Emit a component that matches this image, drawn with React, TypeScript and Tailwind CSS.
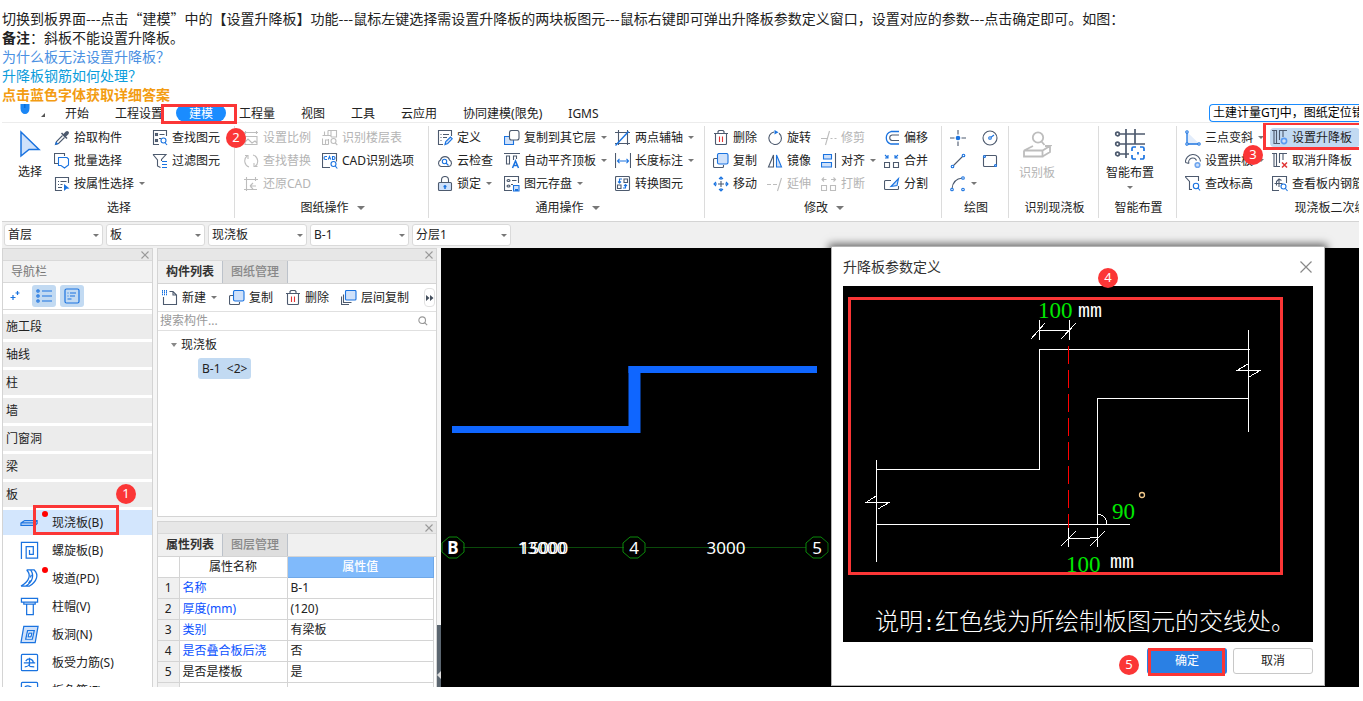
import type { ReactNode } from "react";

type Draw = (c: string, b: string) => ReactNode;

const SLATE = "#4d5a6e";
const BLUE = "#1a73e0";
const MUTED = "#bdbdbd";
const PALE = "#cfe1fa";

const icons: Record<string, Draw> = {
  picker: (c, b) => (
    <>
      <path d="M7.500 3l5.500 5.500" stroke={c} fill="none" strokeWidth="1.600" />
      <path d="M8.500 5 11.800 1.600a1.800 1.800 0 0 1 2.600 2.600L11 7.500z" fill={c} />
      <path d="M8.500 5.500 2.500 11.500 1.500 14.500 4.500 13.500 10.500 7.500" stroke={c} fill="none" />
      <path d="M1 15l1-3.500L4.500 14z" fill={b} />
    </>
  ),
  batch: (c, b) => (
    <>
      <path d="M4 10.500H.5V.5h10V3" stroke={c} fill="none" />
      <path d="M4.500 4.500h8.500l1.500 1.500v6l-4 3-3.500-2.500H4.500z" stroke={b} fill="#fff" />
    </>
  ),
  byProp: (c, b) => (
    <>
      <path d="M8 14.500H1.500V1.500h13V7M4 5.500h1M6.500 5.500h6M4 8.500h1M6.500 8.500h2M4 11.500h4" stroke={c} fill="none" />
      <path d="M10 8l5.500 4.500-3 .3-2.500 2.200z" fill={b} />
    </>
  ),
  find: (c, b) => (
    <>
      <path d="M7 14.500H1.500V.5h13V6M7.500 4.500h5M7 8.500h2" stroke={c} fill="none" />
      <rect x="3.500" y="3.500" width="2" height="2" stroke={c} fill="none" />
      <rect x="3.500" y="9.500" width="2" height="2" stroke={c} fill="none" />
      <circle cx="11.500" cy="10.500" r="2.500" stroke={b} fill="none" />
      <path d="M13 12.500l2 2.500" stroke={b} />
    </>
  ),
  filter: (c, b) => (
    <>
      <path d="M1 1.500h13L9.500 6.500V8M1 1.500 5.500 7v6l3 1.500" stroke={c} fill="none" />
      <path d="M10 8.500h5M10 11.500h5M10 14.500h5" stroke={b} />
    </>
  ),
  scale: (c) => (
    <path d="M1 2.500h14M2.500 1v3M13.500 1v3M2 6.500h12v8H2zM2 12l3-3 4 4 3-2 2 2" stroke={c} fill="none" />
  ),
  replace: (c) => (
    <path d="M6 14A6.500 6.500 0 0 1 4 3M2 2.500h3V6M10 2a6.500 6.500 0 0 1 2 11.500M14.500 13.500H11V10" stroke={c} fill="none" />
  ),
  restore: (c) => (
    <path d="M1 3.500h14M3.500 1v14M1 13.500h13M12.500 1v4M7 10l3-3M7 10l3 3M7 10h6" stroke={c} fill="none" />
  ),
  floors: (c) => (
    <>
      <path d="M6 .5h8.500V7H9M9 .5V7M6 .5V5.500M.5 5.500h8M2.500 5.500v-4M.5 8.500v6h6M3.500 14v-4h3M6.500 9v5.500" stroke={c} fill="none" />
      <circle cx="11.500" cy="11" r="2.500" stroke={c} fill="none" />
      <path d="M13.300 13l2 2" stroke={c} />
    </>
  ),
  cadOpt: (c, b) => (
    <>
      <path d="M8 14.500H.5V.5h14v8" stroke={c} fill="none" />
      <path d="M5 3.500H3.500a.9.9 0 0 0 0 3H5M6.300 6.500l1.200-3 1.200 3M10.500 3.500v3h1a1.500 1.500 0 0 0 0-3z" stroke={b} fill="none" />
      <circle cx="11.500" cy="11" r="2.500" stroke={b} fill="none" />
      <path d="M13.300 13l2 2.500" stroke={b} />
    </>
  ),
  define: (c, b) => (
    <>
      <path d="M6 14.500H1.500V.5h13V6M3.500 4.500h1M6 4.500h6M3.500 7.500h1M6 7.500h4M3.500 10.500h1" stroke={c} fill="none" />
      <path d="M8 14.500l.8-3 4.700-4.500 1.800 1.800-4.600 4.700z" stroke={b} fill={PALE} />
    </>
  ),
  cloud: (c, b) => (
    <>
      <path d="M4 13.500a3.500 3.500 0 0 1-.5-6.500 4.700 4.700 0 0 1 9 0 3.500 3.500 0 0 1-.5 6.500z" stroke={c} fill="none" />
      <circle cx="7.500" cy="8.500" r="2.200" stroke={b} fill="none" />
      <path d="M9 10l2.500 2.500" stroke={b} />
    </>
  ),
  lock: (c, b) => (
    <>
      <path d="M4.500 6V4a3.500 3.500 0 0 1 7 0v2" stroke={c} fill="none" />
      <rect x="1.500" y="6.500" width="13" height="8" rx="1" stroke={c} fill={PALE} />
      <path d="M8 9v4M6.500 10.500h3" stroke={b} strokeWidth="1.500" />
    </>
  ),
  copy: (c, b) => (
    <>
      <path d="M4 5.500H1.500a1 1 0 0 0-1 1v7a1 1 0 0 0 1 1h8a1 1 0 0 0 1-1V12" stroke={c} fill="none" />
      <rect x="4.500" y=".5" width="10.500" height="10.500" rx="1.500" stroke={b} fill={PALE} />
    </>
  ),
  copyFloor: (c, b) => (
    <>
      <path d="M.5 6.500h9v8h-9z" stroke={b} fill={PALE} />
      <rect x="5.500" y=".5" width="9.500" height="9.500" rx="2" stroke={c} fill="#fff" />
    </>
  ),
  alignTop: (c, b) => (
    <>
      <path d="M0 .5h16M2.500 3v8h3V3zM9.500 7V3h3v3" stroke={c} fill="none" />
      <path d="M8.500 15 11.500 8l3 7M9.500 12.500h4" stroke={b} fill="none" strokeWidth="1.500" />
    </>
  ),
  store: (c, b) => (
    <>
      <path d="M8 14.500H.5V.5h14V7M8 4.500h4.500M7 8.500h2" stroke={c} fill="none" />
      <ellipse cx="4.500" cy="4.500" rx="1.500" ry="1" stroke={c} fill="none" />
      <ellipse cx="4.500" cy="10" rx="1.500" ry="1" stroke={c} fill="none" />
      <path d="M9.500 9.500h5.500v5.500H9.500z" stroke={b} fill={PALE} />
      <path d="M11 13h3v2h-3z" fill={b} />
    </>
  ),
  axis: (c, b) => (
    <>
      <path d="M0 2.500h15M3.500 0v15M0 13.500h15M12.500 0v15" stroke={c} fill="none" />
      <path d="M.5 15.500 13.500 1.500" stroke={b} strokeWidth="1.400" />
    </>
  ),
  length: (c, b) => (
    <>
      <path d="M.5 0v15M15.500 0v15" stroke={c} />
      <path d="M2.500 8h11M4.500 5.800 2.500 8l2 2.200M11.500 5.800 13.500 8l-2 2.200" stroke={b} fill="none" />
    </>
  ),
  convert: (c, b) => (
    <>
      <rect x=".5" y=".5" width="14" height="14" rx="1" stroke={c} fill="none" />
      <path d="M9 3h3.500v3.500H9zM2.500 9h3.500v3.500H2.500z" stroke={c} fill="none" />
      <path d="M7 3H4.500V7M3 5.500 4.500 7 6 5.500M8 12h2.500V8.500M9 10 10.500 8.500 12 10" stroke={b} fill="none" />
    </>
  ),
  trash: (c) => (
    <>
      <path d="M1 3.500h14M5 3.500v-2l1-1h4l1 1v2M2.500 4v9.500a1 1 0 0 0 1 1h9a1 1 0 0 0 1-1V4" stroke={c} fill="none" />
      <path d="M6.500 6.500v5.500M9.500 6.500v5.500" stroke="#e03434" />
    </>
  ),
  move: (c, b) => (
    <>
      <path d="M8 5v6M5 8h6" stroke={c} />
      <path d="M8 1v3M8 12v3M1 8h3M12 8h3M6 3l2-2 2 2M6 13l2 2 2-2M3 6 1 8l2 2M13 6l2 2-2 2" stroke={b} fill="none" />
    </>
  ),
  rotate: (c, b) => (
    <>
      <path d="M7 2a6.300 6.300 0 1 0 5 1.200" stroke={c} fill="none" />
      <path d="M7.500 0l4 2.300-4 2.300z" fill={b} />
    </>
  ),
  mirror: (c, b) => (
    <>
      <path d="M6.500 2v12h-5z" stroke={c} fill="none" />
      <path d="M9.500 2v12h5z" stroke={b} fill={PALE} />
    </>
  ),
  extend: (c) => <path d="M0 8.500h4M6 8.500h4M10.500 15 14.500 2" stroke={c} fill="none" />,
  trim: (c) => <path d="M0 8.500h7M9.500 8.500h2M13.500 8.500h2M4.500 15 8.500 1" stroke={c} fill="none" />,
  align: (c, b) => (
    <>
      <path d="M2.500 1.500h8v4.500h-8zM.5 9.500h10v4.500H.5z" stroke={b} fill={PALE} />
      <path d="M14.500 0v15" stroke={c} />
    </>
  ),
  breakUp: (c) => (
    <path d="M.5 9.500h5v5h-5zM9.500 9.500h5v5h-5zM1 3.500h4.500M3 1.500l-2 2 2 2M14.500 3.500H10M12.500 1.500l2 2-2 2" stroke={c} fill="none" />
  ),
  offset: (c, b) => (
    <>
      <path d="M15 1.500H7a6.500 6.500 0 0 0 0 12.500H15" stroke={b} fill="none" strokeWidth="1.300" />
      <path d="M15 5H8a2.800 2.800 0 0 0 0 5.500h7" stroke={c} fill="none" />
    </>
  ),
  merge: (c, b) => (
    <>
      <path d="M.5 9.500h5v5h-5zM9.500 9.500h5v5h-5z" stroke={c} fill="none" />
      <path d="M1 2l2.500 2.500M4 2v3H1M14 2l-2.500 2.500M11 2v3h3" stroke={b} fill="none" />
    </>
  ),
  split: (c, b) => (
    <>
      <path d="M7 4.500H1.500a1 1 0 0 0-1 1v7a1 1 0 0 0 1 1h12a1 1 0 0 0 1-1V10" stroke={c} fill="none" />
      <path d="M7 10.500 14.500 2.500 13 9.500z" stroke={b} fill={PALE} />
    </>
  ),
  point: (c, b) => (
    <>
      <path d="M8 0v4.500M8 11.500V16M0 8h4.500M11.500 8H16" stroke={c} />
      <circle cx="8" cy="8" r="2.300" fill={b} />
    </>
  ),
  line: (c, b) => (
    <>
      <path d="M2.500 13.500l11-11" stroke={c} />
      <circle cx="2.500" cy="13.500" r="1.300" stroke={b} fill="#fff" />
      <circle cx="13.500" cy="2.500" r="1.300" stroke={b} fill="#fff" />
    </>
  ),
  arc: (c, b) => (
    <>
      <path d="M2 13C2.500 6.500 6 2.500 12.500 2" stroke={c} fill="none" />
      <circle cx="2" cy="13.500" r="1.300" stroke={b} fill="#fff" />
      <circle cx="13" cy="2" r="1.300" stroke={b} fill="#fff" />
      <circle cx="13" cy="13.500" r="1.300" stroke={b} fill="#fff" />
    </>
  ),
  circle: (c, b) => (
    <>
      <circle cx="8" cy="8" r="7" stroke={c} fill="none" />
      <path d="M8 8l4-3" stroke={b} />
      <circle cx="8" cy="8" r="1.300" stroke={b} fill="#fff" />
    </>
  ),
  rect: (c, b) => (
    <>
      <rect x="1.500" y="2.500" width="13" height="11" stroke={c} fill="none" rx="1" />
      <circle cx="2.500" cy="3.500" r="1" stroke={b} fill="#fff" />
      <circle cx="13.500" cy="12.500" r="1" stroke={b} fill="#fff" />
    </>
  ),
  slope: (_c, b) => (
    <>
      <path d="M2 2 14 13.500H2z" fill="#e3edfb" />
      <path d="M2 2v12h12" stroke={b} fill="none" strokeWidth="1.300" />
      <circle cx="2" cy="2" r="1.200" stroke={b} fill="#fff" />
      <circle cx="14" cy="14" r="1.200" stroke={b} fill="#fff" />
      <circle cx="2" cy="14" r="1.200" stroke={b} fill="#fff" />
    </>
  ),
  arch: (c) => (
    <>
      <path d="M.5 9.500a7.500 7.500 0 0 1 15-1M4 10.500a4 4 0 0 1 7.500-3M.5 9.500 4 10.500" stroke={c} fill="none" />
      <circle cx="12.500" cy="12" r="2.300" stroke="#6ea5ee" fill={PALE} strokeWidth="1.600" />
    </>
  ),
  level: (c, b) => (
    <>
      <path d="M0 .5h13.500V5M0 .5 4.500 5.500v8H7" stroke={c} fill="none" />
      <circle cx="11" cy="10" r="2.700" stroke={b} fill="none" />
      <path d="M13 12l2 2.500" stroke={b} />
    </>
  ),
  setStep: (c) => (
    <>
      <path d="M0 .5h4.500v13H8M15 .5h-4V7M7.500 10V.5h3M0 .5h2v13h2.500" stroke={c} fill="none" />
      <circle cx="12" cy="11" r="2.600" stroke="#5b9bf0" fill={PALE} strokeWidth="1.600" />
    </>
  ),
  unsetStep: (c) => (
    <>
      <path d="M0 .5h4.500v13H8M15 .5h-4V7M7.500 10V.5h3M0 .5h2v13h2.500" stroke={c} fill="none" />
      <path d="M10 9.500l5 5M15 9.500l-5 5" stroke="#e03434" strokeWidth="1.500" />
    </>
  ),
  rebar: (c, b) => (
    <>
      <path d="M7 14.500H.5V.5h14V7M2.500 7.500h8M7 3v8M9.500 4.500 7 3 4.500 5.500v4" stroke={c} fill="none" />
      <circle cx="11.500" cy="10.500" r="2.500" stroke={b} fill="none" />
      <path d="M13.500 12.500l2 2.500" stroke={b} />
    </>
  ),
  newDoc: (c, b) => (
    <>
      <path d="M7.500 1.500H11l3.500 3.500v9.500h-13V7M11 1.500V5h3.500" stroke={c} fill="none" />
      <path d="M0 .8h5M0 2.600h5M0 4.400h5" stroke={b} strokeDasharray="1 1" strokeWidth="1.500" />
    </>
  ),
  layerCopy: (c, b) => (
    <>
      <path d="M2.500 4.500v8h8M.5 6.500v8H8" stroke={c} fill="none" />
      <rect x="4.500" y=".5" width="10.500" height="9.500" rx="1" stroke={b} fill={PALE} />
    </>
  ),
};

function Icon({ name, off }: { name: string; off?: boolean }) {
  return (
    <svg viewBox="0 0 16 16" className="h-4 w-4 shrink-0" strokeWidth="1.1" aria-hidden="true">
      {icons[name](off ? MUTED : SLATE, off ? MUTED : BLUE)}
    </svg>
  );
}

function Caret() {
  return <span className="block h-0 w-0 shrink-0 border-x-[3px] border-t-[3px] border-x-transparent border-t-[#777]" />;
}

type Item = { icon: string; text?: string; off?: boolean; caret?: boolean; on?: boolean };

function Tool({ icon, text, off, caret, on }: Item) {
  return (
    <button
      type="button"
      disabled={off}
      aria-label={text ?? icon}
      className={`relative flex h-[23px] items-center gap-1 whitespace-nowrap ${off ? "text-[#b4b4b4]" : "text-[#222]"}`}
    >
      {on && <span className="absolute -left-[2px] -right-2 top-[2px] h-[19px] rounded-sm bg-[#c2daf2]" />}
      <span className="relative flex items-center gap-1">
        <Icon name={icon} off={off} />
        {text}
      </span>
      {caret && (
        <span className="pl-px">
          <Caret />
        </span>
      )}
      {on && <span className="absolute -left-[9px] -right-3 -top-[4px] h-7 border-[3px] border-[#fb3636]" />}
    </button>
  );
}

function Column({ width, items }: { width: string; items: Item[] }) {
  return (
    <div className={`flex shrink-0 flex-col items-start ${width}`}>
      {items.map((it, i) => (
        <Tool key={i} {...it} />
      ))}
    </div>
  );
}

function Group({ label, caret, width, children }: { label: string; caret?: boolean; width: string; children: ReactNode }) {
  return (
    <section className={`mb-[3px] flex shrink-0 flex-col border-r border-[#dcdcdc] ${width}`}>
      <div className="flex h-[69px]">{children}</div>
      <div className="flex h-6 items-end justify-center gap-2 pl-[2px] leading-5">
        {label}
        {caret && <span className="mb-2 h-0 w-0 border-x-4 border-t-4 border-x-transparent border-t-[#777]" />}
      </div>
    </section>
  );
}

function Badge({ n, place }: { n: number; place: string }) {
  return (
    <span className={`absolute z-20 flex h-5 w-5 items-center justify-center rounded-full bg-[#fb3636] text-[13px] text-white ${place}`}>
      {n}
    </span>
  );
}

const tabs = ["开始", "工程设置", "建模", "工程量", "视图", "工具", "云应用", "协同建模(限免)", "IGMS"];

function Tabs() {
  return (
    <nav className="flex h-[18px] items-stretch">
      <div className="flex w-[50px] shrink-0 items-start pl-[17px]">
        <svg viewBox="0 0 30 18" className="h-[18px] w-[30px]" aria-hidden="true">
          <path d="M1.500 0h9v4.500a4.500 5.500 0 0 1-9 0z" fill="#1b86f5" />
          <path d="M5 0h1.500v4H5z" fill="#0a6fd8" />
          <path d="M26 9v4h-4z" fill="#555" />
        </svg>
      </div>
      {tabs.map((t) =>
        t === "建模" ? (
          <button key={t} type="button" className="relative shrink-0 rounded-[9px] bg-[#1a8cff] px-[13px] pt-[2px] leading-4 text-white">
            {t}
            <span className="absolute -left-[15px] -right-[11px] top-0 z-10 h-5 border-[3px] border-[#fb3636]" />
          </button>
        ) : (
          <button key={t} type="button" className="shrink-0 px-[13px] pt-[2px] leading-4">
            {t}
          </button>
        ),
      )}
      <input
        aria-label="搜索"
        defaultValue="土建计量GTJ中，图纸定位错误"
        className="ml-auto w-[150px] shrink-0 rounded-l-sm border border-r-0 border-[#1a8cff] pl-[3px] text-black outline-none"
      />
    </nav>
  );
}

function Ribbon() {
  return (
    <div className="flex h-[99px] overflow-hidden border-t border-[#ececec] pt-[3px]">
      <Group label="选择" width="w-[233px]">
        <button type="button" className="flex w-[52px] shrink-0 flex-col items-center gap-[6px] pl-1 pt-[4px]">
          <svg viewBox="0 0 24 28" className="h-7 w-6" aria-hidden="true">
            <path d="M3 2 21 19.500H11L3 26z" fill={PALE} stroke={BLUE} strokeWidth="1.500" />
          </svg>
          <span>选择</span>
        </button>
        <Column
          width="w-[98px]"
          items={[
            { icon: "picker", text: "拾取构件" },
            { icon: "batch", text: "批量选择" },
            { icon: "byProp", text: "按属性选择", caret: true },
          ]}
        />
        <Column width="w-20" items={[{ icon: "find", text: "查找图元" }, { icon: "filter", text: "过滤图元" }]} />
      </Group>
      <Group label="图纸操作" caret width="w-[194px]">
        <div className="flex pl-2">
          <Column
            width="w-[79px]"
            items={[
              { icon: "scale", text: "设置比例", off: true },
              { icon: "replace", text: "查找替换", off: true },
              { icon: "restore", text: "还原CAD", off: true },
            ]}
          />
          <Column width="w-24" items={[{ icon: "floors", text: "识别楼层表", off: true }, { icon: "cadOpt", text: "CAD识别选项" }]} />
        </div>
      </Group>
      <Group label="通用操作" caret width="w-[276px]">
        <div className="flex pl-2">
          <Column
            width="w-[67px]"
            items={[
              { icon: "define", text: "定义" },
              { icon: "cloud", text: "云检查" },
              { icon: "lock", text: "锁定", caret: true },
            ]}
          />
          <Column
            width="w-[111px]"
            items={[
              { icon: "copyFloor", text: "复制到其它层", caret: true },
              { icon: "alignTop", text: "自动平齐顶板", caret: true },
              { icon: "store", text: "图元存盘", caret: true },
            ]}
          />
          <Column
            width="w-20"
            items={[
              { icon: "axis", text: "两点辅轴", caret: true },
              { icon: "length", text: "长度标注", caret: true },
              { icon: "convert", text: "转换图元" },
            ]}
          />
        </div>
      </Group>
      <Group label="修改" caret width="w-[237px]">
        <div className="flex pl-2">
          <Column
            width="w-[54px]"
            items={[
              { icon: "trash", text: "删除" },
              { icon: "copy", text: "复制" },
              { icon: "move", text: "移动" },
            ]}
          />
          <Column
            width="w-[54px]"
            items={[
              { icon: "rotate", text: "旋转" },
              { icon: "mirror", text: "镜像" },
              { icon: "extend", text: "延伸", off: true },
            ]}
          />
          <Column
            width="w-[63px]"
            items={[
              { icon: "trim", text: "修剪", off: true },
              { icon: "align", text: "对齐", caret: true },
              { icon: "breakUp", text: "打断", off: true },
            ]}
          />
          <Column
            width="w-[52px]"
            items={[
              { icon: "offset", text: "偏移" },
              { icon: "merge", text: "合并" },
              { icon: "split", text: "分割" },
            ]}
          />
        </div>
      </Group>
      <Group label="绘图" width="w-[67px]">
        <div className="flex pl-2">
          <Column width="w-8" items={[{ icon: "point" }, { icon: "line" }, { icon: "arc", caret: true }]} />
          <Column width="w-5" items={[{ icon: "circle" }, { icon: "rect" }]} />
        </div>
      </Group>
      <Group label="识别现浇板" width="w-[90px]">
        <button type="button" disabled className="flex w-14 flex-col items-center gap-[6px] pt-[5px] text-[#b4b4b4]">
          <svg viewBox="0 0 30 28" className="h-7 w-[30px]" fill="none" stroke="#bdbdbd" strokeWidth="1.800" aria-hidden="true">
            <circle cx="16" cy="6.500" r="5.200" />
            <path d="M19.500 10.500 22.500 14M11 15 2 19.500h18.500L28 15h-5M2 19.500v6h18.500v-6M28 15v6l-7.500 4.500" />
          </svg>
          <span>识别板</span>
        </button>
      </Group>
      <Group label="智能布置" width="w-[78px]">
        <button type="button" className="flex w-[62px] flex-col items-center gap-[6px] pt-[2px]">
          <svg viewBox="0 0 32 32" className="h-8 w-8" fill="none" strokeWidth="1.700" aria-hidden="true">
            <path d="M12 1v29M21 1v15M5 6h26M5 16h26M5 26h10" stroke={SLATE} />
            <circle cx="3.500" cy="6" r="1.800" stroke={SLATE} />
            <circle cx="3.500" cy="16" r="1.800" stroke={SLATE} />
            <circle cx="3.500" cy="26" r="1.800" stroke={SLATE} />
            <rect x="16.500" y="18" width="14" height="14" fill="#fff" stroke="none" />
            <path d="M18 23v-2.500a1.500 1.500 0 0 1 1.500-1.500H22M26 19h2.500a1.500 1.500 0 0 1 1.500 1.500V23M30 27v2.500a1.500 1.500 0 0 1-1.500 1.500H26M22 31h-2.500a1.500 1.500 0 0 1-1.500-1.500V27M24 24v2.500" stroke={BLUE} />
          </svg>
          <span className="leading-[14px]">智能布置</span>
          <Caret />
        </button>
      </Group>
      <Group label="现浇板二次编辑" width="w-[318px]">
        <div className="flex pl-2">
          <Column
            width="w-[87px]"
            items={[
              { icon: "slope", text: "三点变斜", caret: true },
              { icon: "arch", text: "设置拱板", caret: true },
              { icon: "level", text: "查改标高" },
            ]}
          />
          <Column
            width="w-[120px]"
            items={[
              { icon: "setStep", text: "设置升降板", on: true },
              { icon: "unsetStep", text: "取消升降板" },
              { icon: "rebar", text: "查看板内钢筋" },
            ]}
          />
        </div>
      </Group>
    </div>
  );
}

function SelectRow() {
  return (
    <div className="flex h-[27px] items-center gap-[3px] border-t border-[#d4d4d4] bg-[#f0f0f0] pl-[2px]">
      {["首层", "板", "现浇板", "B-1", "分层1"].map((v, i) => (
        <label key={v} className="relative flex w-[99px] items-center">
          <select
            aria-label={["楼层", "构件类型", "构件", "名称", "分层"][i]}
            className="h-[22px] w-full appearance-none rounded-[3px] border border-[#dadada] bg-white pl-[3px] text-[#222] outline-none"
          >
            <option>{v}</option>
          </select>
          <span className="pointer-events-none absolute right-1">
            <Caret />
          </span>
        </label>
      ))}
    </div>
  );
}

function Strip() {
  return (
    <div className="flex h-3 shrink-0 items-center justify-end border-b border-[#d9d9d9] bg-[#e7e7e7] pr-[3px]">
      <button type="button" aria-label="关闭" className="flex">
        <svg viewBox="0 0 8 8" className="h-2 w-2" stroke="#999" strokeWidth="1.100">
          <path d="M.5.5l7 7M7.500.5l-7 7" />
        </svg>
      </button>
    </div>
  );
}

const slabIcons: ReactNode[] = [
  <path key="a" d="M1 10.500l4-2.500h13v3l-2 2H1zM1 10.500h13l4-2.500" fill="#cfe1fa" />,
  <path key="b" d="M1.500 19V1.500h17v16.500H6.500V6H14v8h-4V9.500" />,
  <path key="c" d="M7 1c5 5 3 12-6 17M11 1c4 5 3 12-5 17M11 1h4c5 5 3 12-5 17H1M7 1h4M12 6l-1 3M11 12l-2 3" />,
  <path key="d" d="M1.500 1.500h17v4h-17zM4 5.500v2h12v-2M7 7.500v11h7v-11" />,
  <g key="e">
    <path d="M4 1.500h15l-3 17H1z" fill="#cfe1fa" />
    <path d="M8 6h7l-2 9H6zM9.500 8.500h3l-1 4h-3z" fill="#fff" />
  </g>,
  <g key="f">
    <rect x="1.500" y="1.500" width="17" height="17" rx="1" />
    <path d="M4 10.500h12M10 5v9M6 8.500c3-4 8-2 8 2M5 14.500c3 0 5-2 5-4M10 14l5 .5" />
  </g>,
  <g key="g">
    <rect x="1.500" y="1.500" width="17" height="17" rx="1" />
    <path d="M5 6c4-2 8 0 9 4M5 12l9-4" />
  </g>,
];
const slabs = ["现浇板(B)", "螺旋板(B)", "坡道(PD)", "柱帽(V)", "板洞(N)", "板受力筋(S)", "板负筋(F)"];

function NavPanel() {
  return (
    <aside className="flex w-[151px] shrink-0 flex-col border-x border-t border-[#d4d4d4] bg-white">
      <Strip />
      <h2 className="flex h-[22px] shrink-0 items-center border-b border-[#d9d9d9] bg-[#f2f2f2] pl-2 text-[#777]">导航栏</h2>
      <div className="flex h-[27px] shrink-0 items-center gap-1 border-b border-[#d9d9d9] pl-[7px]">
        <button type="button" aria-label="展开" className="mr-2">
          <svg viewBox="0 0 10 12" className="h-3 w-[10px]" stroke={BLUE} strokeWidth="1.200">
            <path d="M3 5v5M.5 7.500h5M7.500 1v4M5.500 3h4" />
          </svg>
        </button>
        <button type="button" aria-label="列表" className="flex h-[22px] w-6 items-center justify-center rounded-[3px] bg-[#c2daf2]">
          <svg viewBox="0 0 16 14" className="h-[14px] w-4" fill="none" stroke={BLUE} strokeWidth="1.200">
            <path d="M6 2h10M6 7h10M6 12h10" />
            <circle cx="2" cy="2" r="1.200" />
            <circle cx="2" cy="7" r="1.200" />
            <circle cx="2" cy="12" r="1.200" />
          </svg>
        </button>
        <button type="button" aria-label="详情" className="flex h-[22px] w-6 items-center justify-center rounded-[3px] bg-[#c2daf2]">
          <svg viewBox="0 0 16 16" className="h-4 w-4" fill="none" stroke={BLUE} strokeWidth="1.200">
            <rect x="1" y="1" width="14" height="14" rx="1.500" />
            <path d="M3.500 5h1M6 5h6M3.500 8h1M6 8h5M3.500 11h4" />
          </svg>
        </button>
      </div>
      <ul className="flex flex-col gap-[3px] pt-1">
        {["施工段", "轴线", "柱", "墙", "门窗洞", "梁", "板"].map((t) => (
          <li key={t} className="flex h-[25px] shrink-0 items-center bg-[#ececec] pl-[3px]">
            {t}
          </li>
        ))}
        {slabs.map((t, i) => (
          <li key={t} className={`relative flex h-[25px] shrink-0 items-center gap-[13px] pl-[17px] ${i === 0 ? "bg-[#d3e6fd]" : ""}`}>
            <svg viewBox="0 0 20 20" className="h-[19px] w-[19px] shrink-0" fill="none" stroke={BLUE} strokeWidth="1.300" aria-hidden="true">
              {slabIcons[i]}
            </svg>
            {t}
            {(i === 0 || i === 2) && <span className="absolute left-[39px] top-1 h-[6px] w-[6px] -translate-y-1/2 rounded-full bg-[#ff0000]" />}
            {i === 0 && <span className="absolute -top-[5px] left-[30px] h-[30px] w-[86px] border-[3px] border-[#fb3636]" />}
          </li>
        ))}
      </ul>
    </aside>
  );
}

function PanelTabs({ a, b }: { a: string; b: string }) {
  return (
    <div className="flex h-[23px] shrink-0 border-b border-[#d4d4d4] bg-[#f0f0f0]">
      <button type="button" className="w-[65px] border-r border-[#bcc2ca] font-bold text-[#333]">
        {a}
      </button>
      <button type="button" className="w-[65px] border-r border-[#bcc2ca] bg-[#dedede] font-medium text-[#888]">
        {b}
      </button>
    </div>
  );
}

const props: [string, string, boolean][] = [
  ["名称", "B-1", true],
  ["厚度(mm)", "(120)", true],
  ["类别", "有梁板", true],
  ["是否叠合板后浇", "否", true],
  ["是否是楼板", "是", false],
];

function MiddlePanels() {
  return (
    <div className="flex w-[280px] shrink-0 flex-col gap-1">
      <section className="flex h-[269px] shrink-0 flex-col border border-[#d4d4d4] bg-white">
        <Strip />
        <PanelTabs a="构件列表" b="图纸管理" />
        <div className="flex h-7 shrink-0 items-center border-b border-[#e0e0e0] pl-1">
          <div className="flex flex-1 gap-3">
            <Tool icon="newDoc" text="新建" caret />
            <Tool icon="copy" text="复制" />
            <Tool icon="trash" text="删除" />
            <Tool icon="layerCopy" text="层间复制" />
          </div>
          <button type="button" aria-label="更多" className="mr-px flex h-[19px] w-[11px] items-center justify-center rounded-sm border border-[#e2e2e2]">
            <svg viewBox="0 0 8 6" className="h-[6px] w-2 shrink-0" fill="#444e5c">
              <path d="M0 0l3.500 3L0 6zM4 0l3.500 3L4 6z" />
            </svg>
          </button>
        </div>
        <label className="flex h-[19px] shrink-0 items-center border-b border-[#e0e0e0] pl-[2px] pr-2">
          <input aria-label="搜索构件" placeholder="搜索构件..." className="min-w-0 flex-1 outline-none placeholder:text-[#999]" />
          <svg viewBox="0 0 12 12" className="h-[10px] w-[10px]" fill="none" stroke="#999" strokeWidth="1.300">
            <circle cx="5" cy="5" r="4" />
            <path d="M8 8l3 3" />
          </svg>
        </label>
        <div className="flex flex-col items-start gap-[3px] pl-[13px] pt-1">
          <div className="flex h-5 items-center gap-1">
            <span className="h-0 w-0 border-x-[3px] border-t-4 border-x-transparent border-t-[#888]" />
            现浇板
          </div>
          <div className="ml-[27px] flex h-[21px] items-center whitespace-pre rounded-[3px] bg-[#c2daf2] px-1">B-1  &lt;2&gt;</div>
        </div>
      </section>
      <section className="flex shrink-0 flex-col border border-[#d4d4d4] bg-white">
        <Strip />
        <PanelTabs a="属性列表" b="图层管理" />
        <table className="w-[276px] table-fixed border-collapse text-left">
          <thead>
            <tr className="h-5">
              <th className="w-[21px] border-b border-r border-[#d4d4d4]" />
              <th className="w-[108px] border-b border-r border-[#d4d4d4] text-center font-normal">属性名称</th>
              <th className="border border-t-0 border-[#6fa8e8] bg-[#80bafb] text-center font-medium text-white">属性值</th>
            </tr>
          </thead>
          <tbody>
            {props.map(([k, v, link], i) => (
              <tr key={k} className="h-[21px]">
                <td className="border-b border-r border-[#d4d4d4] bg-[#f0f0f0] text-center">{i + 1}</td>
                <td className={`border-b border-r border-[#d4d4d4] pl-[3px] ${link ? "text-[#0b52ff]" : ""}`}>{k}</td>
                <td className="border-b border-r border-[#d4d4d4] pl-[3px]">{v}</td>
              </tr>
            ))}
            <tr className="h-[21px]">
              <td className="border-r border-[#d4d4d4] bg-[#f0f0f0]" />
              <td className="border-r border-[#d4d4d4]" />
              <td className="border-r border-[#d4d4d4]" />
            </tr>
          </tbody>
        </table>
      </section>
    </div>
  );
}

function AxisMark({ x, label, bold }: { x: number; label: string; bold?: boolean }) {
  return (
    <g>
      <path d={`M${x - 4} 289h8l7 6v9l-7 6h-8l-7-6v-9z`} fill="none" stroke="#0a8a0a" />
      <text x={x} y="306" textAnchor="middle" fill="#fff" fontSize="17" fontWeight={bold ? 700 : 400}>
        {label}
      </text>
    </g>
  );
}

function Viewport() {
  return (
    <div className="min-w-0 flex-1 overflow-hidden bg-black">
      <svg viewBox="0 0 400 439" className="h-[439px] w-[400px] font-['Noto_Sans',sans-serif]">
        <path d="M11 181.500h182M187.500 121.500h188.500" stroke="#0f66ff" strokeWidth="7" />
        <path d="M193.500 118v67" stroke="#0f66ff" strokeWidth="12" />
        <path d="M22 299.500h161M205 299.500h160" stroke="#0a4a0a" />
        <AxisMark x={12} label="B" bold />
        <AxisMark x={193} label="4" />
        <AxisMark x={376} label="5" />
        <g fill="#fff" fontSize="17" textAnchor="middle">
          <text x="101" y="306">13000</text>
          <text x="103" y="306">15000</text>
          <text x="285" y="306">3000</text>
        </g>
      </svg>
    </div>
  );
}

function StepDiagram() {
  return (
    <svg viewBox="843 286 470 356" className="block h-[356px] w-[470px] bg-black" fill="none" stroke="#fff" shapeRendering="crispEdges">
      <path d="M1039.500 320v20M1069.500 320v20M1039 330.500h30M1031 339l14-16M1061 339l15-16" />
      <path d="M1249.500 349.500H1039.500V469.500H876.500M1248.500 330v102M1248.500 398.500H1097.500V524M876.500 460v102M876 524.500h254" />
      <path d="M1248 364l-11 6.500h23l-11 6.500M876 496l-10 6.500h23l-11 6.500" />
      <path d="M1097 514a10 10 0 0 1 10 10" />
      <path d="M1068.500 528v19M1097.500 528v19M1068 538.500h15l14-1M1061 546l15-15M1090 546l15-15" />
      <path d="M1068.500 346v182" stroke="#f00" strokeDasharray="18 6" />
      <circle cx="1142" cy="495" r="2.500" stroke="#f3c98b" strokeWidth="1.300" shapeRendering="auto" />
      <g stroke="none" fill="#00e800" fontSize="23" fontFamily="Liberation Serif, serif">
        <text x="1038" y="318">100</text>
        <text x="1112" y="519">90</text>
        <text x="1066" y="572">100</text>
      </g>
      <g stroke="none" fill="#fff" fontSize="20" fontFamily="Liberation Mono, monospace">
        <text x="1078" y="317">mm</text>
        <text x="1110" y="568">mm</text>
      </g>
      <text x="875" y="630" stroke="none" fill="#fff" fontSize="24" fontWeight="300" fontFamily="Noto Sans CJK SC, sans-serif">
        说明
        <tspan fontFamily="Liberation Mono, monospace" fontSize="20">:</tspan>
        红色线为所绘制板图元的交线处。
      </text>
      <rect x="849.500" y="298.500" width="432" height="275" stroke="#fb3636" strokeWidth="3" />
    </svg>
  );
}

function StepDialog() {
  return (
    <div
      role="dialog"
      aria-label="升降板参数定义"
      className="absolute -top-[2px] left-[829px] z-10 flex w-[494px] flex-col border border-[#b4b4b4] bg-white px-[11px] pb-[11px] shadow-[0_0_8px_2px_rgba(0,0,0,0.6)]"
    >
      <header className="flex h-[39px] items-center justify-between text-sm leading-[18px] text-[#333]">
        升降板参数定义
        <button type="button" aria-label="关闭" className="mr-[1px]">
          <svg viewBox="0 0 12 12" className="h-3 w-3" stroke="#888" strokeWidth="1.200">
            <path d="M.5.5l11 11M11.500.5l-11 11" />
          </svg>
        </button>
      </header>
      <StepDiagram />
      <footer className="flex justify-end gap-[6px] pt-[6px]">
        <button type="button" className="relative h-[26px] w-20 rounded-[3px] bg-[#2a80e4] text-white">
          确定
          <span className="absolute left-[1px] right-[2px] top-0 h-[28px] border-[3px] border-[#fb3636]" />
        </button>
        <button type="button" className="h-[26px] w-20 rounded-[3px] border border-[#c8c8c8] bg-white">
          取消
        </button>
      </footer>
      <Badge n={4} place="left-[266px] top-[21px]" />
      <Badge n={5} place="left-[287px] top-[408px]" />
    </div>
  );
}

export default function App() {
  return (
    <main lang="zh-CN" className="bg-white pl-[2px] pr-1 pt-[9px] font-['Noto_Sans_CJK_SC',sans-serif] text-[#222]">
      <article className="text-sm leading-[19px]">
        <p>
          切换到板界面---点击“建模”中的【设置升降板】功能---鼠标左键选择需设置升降板的两块板图元---鼠标右键即可弹出升降板参数定义窗口，设置对应的参数---点击确定即可。如图：
        </p>
        <p>
          <strong>备注</strong>：斜板不能设置升降板。
        </p>
        <p>
          <a href="#why" className="text-[#4a90e2]">为什么板无法设置升降板？</a>
        </p>
        <p>
          <a href="#rebar" className="text-[#0d9ddb]">升降板钢筋如何处理？</a>
        </p>
        <p className="font-bold text-[#f39c12]">点击蓝色字体获取详细答案</p>
      </article>
      <div className="relative overflow-hidden font-['Noto_Sans','Noto_Sans_CJK_SC',sans-serif] text-xs">
        <Tabs />
        <Ribbon />
        <SelectRow />
        <div className="relative flex h-[439px] bg-[#f6f6f6]">
          <NavPanel />
          <div className="w-1 shrink-0" />
          <MiddlePanels />
          <div className="flex w-1 shrink-0 flex-col justify-end">
            <div className="flex h-[62px] items-end bg-[#5b6670] pb-2">
              <svg viewBox="0 0 4 8" className="h-2 w-1" fill="#ddd" aria-hidden="true">
                <path d="M4 0v8L0 4z" />
              </svg>
            </div>
          </div>
          <Viewport />
          <StepDialog />
        </div>
        <Badge n={1} place="left-[114px] top-[380px]" />
        <Badge n={2} place="left-[224px] top-[24px]" />
        <Badge n={3} place="left-[1241px] top-[41px]" />
      </div>
    </main>
  );
}
